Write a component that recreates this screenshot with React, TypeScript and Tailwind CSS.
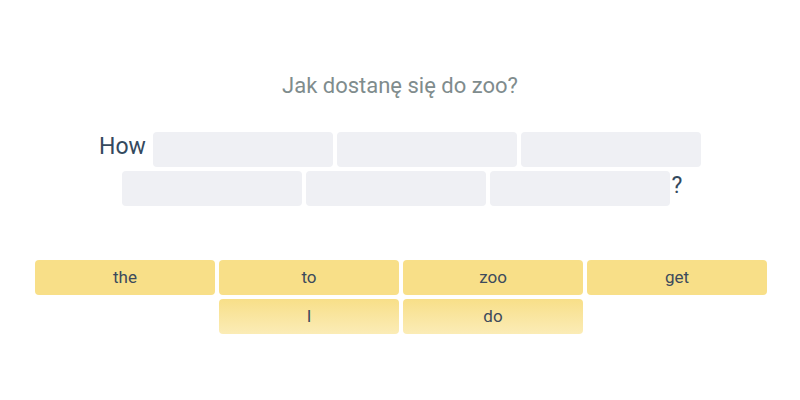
export default function App() {
  const slot = "w-[180px] h-[35px] rounded-[4px] bg-[#eff0f4]";
  const word = "w-[180px] h-[35px] rounded-[4px] flex items-center justify-center text-[17px] text-[#3c4a5c]";

  return (
    <div className="w-[800px] h-[400px] bg-white font-['Roboto',sans-serif] flex flex-col items-center">
      <h1 className="mt-[72px] text-[22px] leading-[28px] text-[#7f8c8d]">Jak dostanę się do zoo?</h1>

      <div className="mt-[32px] flex flex-col items-center gap-[4px]">
        <div className="flex items-center gap-[4px]">
          <span className="text-[23px] leading-[28px] text-[#34495e] mr-[3px] -mt-[6px]">How</span>
          <div className={slot} />
          <div className={slot} />
          <div className={slot} />
        </div>
        <div className="flex items-center gap-[4px] translate-x-[2px]">
          <div className={slot} />
          <div className={slot} />
          <div className={slot} />
          <span className="text-[23px] leading-[28px] text-[#34495e] -ml-[2px] -mt-[6px]">?</span>
        </div>
      </div>

      <div className="mt-[54px] flex flex-col items-center gap-[4px] translate-x-[1px]">
        <div className="flex gap-[4px]">
          {["the", "to", "zoo", "get"].map((w) => (
            <div key={w} className={`${word} bg-[#f8df88]`}>{w}</div>
          ))}
        </div>
        <div className="flex gap-[4px]">
          {["I", "do"].map((w) => (
            <div key={w} className={`${word} bg-gradient-to-b from-[#f8df88] to-[#fbecb6]`}>{w}</div>
          ))}
        </div>
      </div>
    </div>
  );
}
